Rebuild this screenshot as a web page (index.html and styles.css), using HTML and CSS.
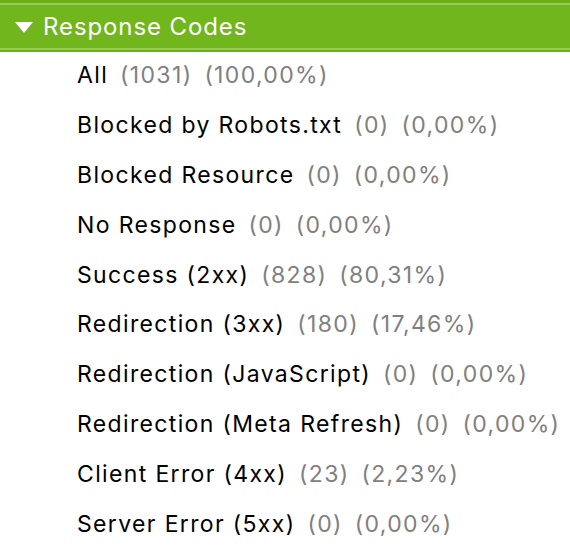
FILE: index.html
```html
<!DOCTYPE html>
<html>
<head>
<meta charset="utf-8">
<link rel="stylesheet" href="styles.css">
</head>
<body>
<div class="panel">
  <div class="header">
    <svg class="tri" width="18" height="11" viewBox="0 0 18 11"><polygon points="0,0 18,0 9,11" fill="#fff"/></svg>
    <span class="title">Response Codes</span>
  </div>
  <ul class="list">
    <li><span class="name">All</span><span class="stat">(1031)</span><span class="stat">(100,00%)</span></li>
    <li><span class="name">Blocked by Robots.txt</span><span class="stat">(0)</span><span class="stat">(0,00%)</span></li>
    <li><span class="name">Blocked Resource</span><span class="stat">(0)</span><span class="stat">(0,00%)</span></li>
    <li><span class="name">No Response</span><span class="stat">(0)</span><span class="stat">(0,00%)</span></li>
    <li><span class="name">Success (2xx)</span><span class="stat">(828)</span><span class="stat">(80,31%)</span></li>
    <li><span class="name">Redirection (3xx)</span><span class="stat">(180)</span><span class="stat">(17,46%)</span></li>
    <li><span class="name">Redirection (JavaScript)</span><span class="stat">(0)</span><span class="stat">(0,00%)</span></li>
    <li><span class="name">Redirection (Meta Refresh)</span><span class="stat">(0)</span><span class="stat">(0,00%)</span></li>
    <li><span class="name">Client Error (4xx)</span><span class="stat">(23)</span><span class="stat">(2,23%)</span></li>
    <li><span class="name">Server Error (5xx)</span><span class="stat">(0)</span><span class="stat">(0,00%)</span></li>
  </ul>
</div>
</body>
</html>
```

FILE: styles.css
```css
html, body {
  margin: 0;
  padding: 0;
  background: #fff;
}
body {
  font-family: Inter, "Liberation Sans", Arial, sans-serif;
  width: 570px;
  height: 552px;
  overflow: hidden;
}
.header {
  box-sizing: border-box;
  height: 52px;
  background: #71b61c;
  border-top: 3px solid #6aae18;
  border-bottom: 2px solid #6aae18;
  box-shadow: inset 0 2px 0 #96cb56, inset 0 -2px 0 #96cb56;
  display: flex;
  align-items: center;
  padding-left: 15px;
  gap: 10px;
}
.tri {
  display: block;
  margin-top: 1px;
}
.title {
  color: #fff;
  font-size: 24px;
  letter-spacing: 0.9px;
}
.list {
  list-style: none;
  margin: 0;
  padding: 0 0 0 77px;
}
.list li {
  box-sizing: border-box;
  height: 49.8px;
  padding-bottom: 3px;
  display: flex;
  align-items: center;
  gap: 12px;
  font-size: 23px;
  letter-spacing: 1.35px;
  white-space: nowrap;
}
.name {
  color: #000;
}
.stat {
  color: #808080;
}
```
